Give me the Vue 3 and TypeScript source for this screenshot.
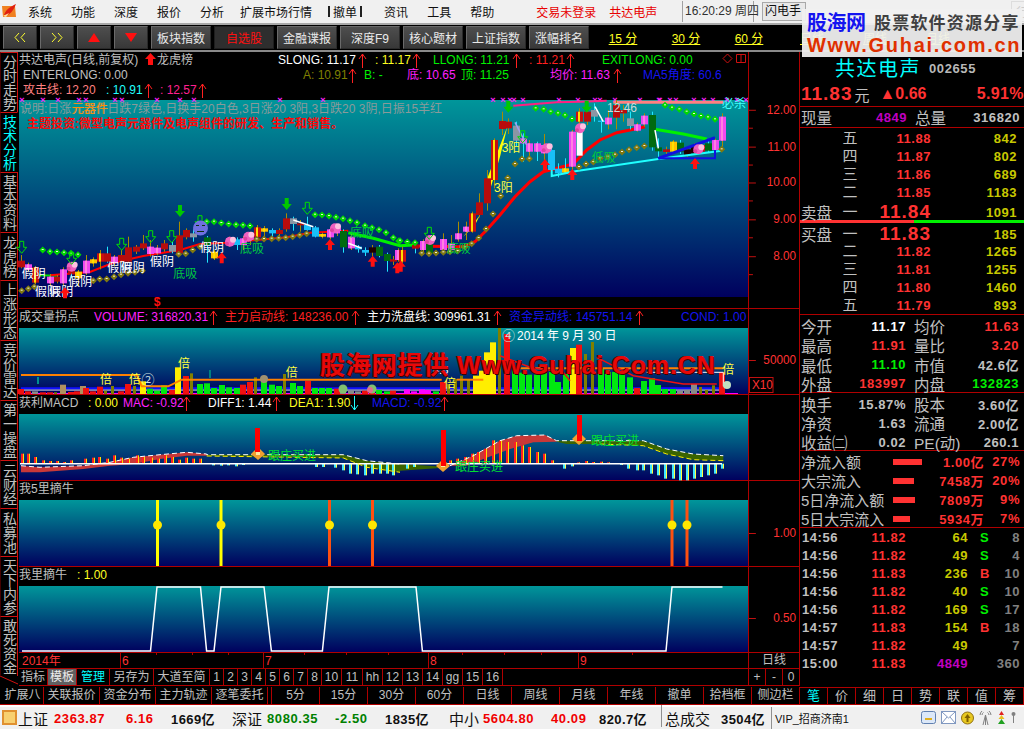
<script setup lang="ts">
type Shape = { k: 'r' | 'p' | 't' | 'c'; x?: number; y?: number; w?: number; h?: number; f?: string; s?: string; sw?: number; d?: string; dash?: string; t?: string; fs?: number; fw?: string; r?: number; a?: string; cls?: string }
type Lg = { x: number; t?: string; c: string; a?: string; w?: number }
type Pt = [number, number]

const Z3 = (p: Pt): Pt => [p[0] / 3, 130 + p[1] / 3]
const Z4 = (p: Pt): Pt => [400 + p[0] / 3, 90 + p[1] / 3]
const Z5 = (p: Pt): Pt => [p[0] / 3, 310 + p[1] / 3]
const Z6 = (p: Pt): Pt => [400 + p[0] / 3, 310 + p[1] / 3]
const dOf = (pts: Pt[]) => pts.map((p, i) => (i ? 'L' : 'M') + p[0].toFixed(1) + ' ' + p[1].toFixed(1)).join(' ')
const line = (pts: Pt[], s: string, sw = 1, dash?: string): Shape => ({ k: 'p', d: dOf(pts), s, sw, f: 'none', dash })
const poly = (pts: Pt[], f: string): Shape => ({ k: 'p', d: dOf(pts) + ' Z', f })
const rect = (x: number, y: number, w: number, h: number, f: string): Shape => ({ k: 'r', x, y, w, h, f })
const text = (x: number, y: number, t: string, f: string, fs = 12, fw = 'normal', a = 'start'): Shape => ({ k: 't', x, y, t, f, fs, fw, a })
const circle = (x: number, y: number, r: number, f: string): Shape => ({ k: 'c', x, y, r, f })
const diamond = (p: Pt, f: string): Shape[] => [poly([[p[0], p[1] - 3.5], [p[0] + 3.5, p[1]], [p[0], p[1] + 3.5], [p[0] - 3.5, p[1]]], f), rect(p[0] - 1, p[1] - 1, 2, 1, '#f0f0e0')]

const bodyCol: Record<string, string> = { r: '#b80c0c', y: '#c81010', m: '#f048f0', g: '#006a10', c: '#18c0f8', s: '#8a96a4', o: '#ffc000', k: '#200000' }
const candle = (map: (p: Pt) => Pt, v: [number, number, number, number, number, string, string?]): Shape[] => {
  const [zx, t, b, wt, wb, col, wc] = v
  const [x, y1] = map([zx, t])
  const [, y2] = map([zx, b])
  const [, w1] = map([zx, wt])
  const [, w2] = map([zx, wb])
  const wick = wc || (col === 'g' || col === 'c' || col === 's' ? '#20e8ff' : '#a88c00')
  const out: Shape[] = [rect(Math.round(x), w1, 1, w2 - w1, wick), rect(Math.round(x) - 3, y1, 7, y2 - y1, bodyCol[col])]
  if (col === 'y' || col === 'o') out.push(rect(Math.round(x) - 1, y1, 2, y2 - y1, '#ffe000'))
  if (col === 'm') out.push(rect(Math.round(x) - 1, y1, 2, y2 - y1, '#ff80e0'))
  return out
}
const candles3: [number, number, number, number, number, string, string?][] = [
  [64, 392, 412, 375, 415, 'r'], [85, 403, 420, 398, 425, 'm'], [105, 412, 458, 408, 462, 'y'], [150, 440, 460, 432, 470, 'm'], [170, 440, 455, 435, 460, 'r'],
  [190, 418, 460, 412, 465, 'm'], [213, 420, 431, 405, 445, 'r', '#20e8ff'], [235, 425, 445, 420, 470, 'o'], [257, 392, 430, 375, 435, 'm'], [280, 388, 400, 382, 410, 'o'],
  [300, 370, 395, 360, 418, 'y'], [320, 370, 395, 350, 398, 'r', '#20e8ff'], [342, 380, 400, 375, 410, 'm'], [363, 375, 392, 360, 398, 'r'], [385, 352, 395, 320, 398, 'r'],
  [408, 350, 365, 345, 372, 'r'], [430, 340, 355, 315, 360, 'r'], [450, 350, 372, 330, 380, 'm'], [472, 353, 370, 345, 376, 'm'], [493, 340, 358, 330, 365, 'r'],
  [515, 345, 365, 335, 370, 's'], [538, 316, 370, 275, 375, 'r'], [558, 300, 322, 295, 328, 'r'], [578, 310, 322, 298, 335, 's'], [622, 322, 345, 318, 398, 'g'],
  [643, 365, 385, 360, 390, 'o'], [688, 325, 340, 320, 350, 'm'], [710, 328, 345, 322, 360, 'c'], [730, 325, 345, 318, 360, 'm'], [750, 310, 330, 305, 345, 'm'],
  [772, 292, 322, 285, 328, 'y'], [793, 295, 305, 288, 320, 'o'], [815, 300, 310, 295, 322, 'c'], [838, 300, 312, 295, 318, 'r'], [858, 265, 298, 250, 305, 'r'],
  [880, 265, 282, 260, 302, 's'], [900, 280, 286, 270, 305, 'r'], [922, 285, 300, 260, 302, 'c'], [945, 292, 320, 288, 322, 'c'], [966, 312, 320, 308, 325, 'o'],
  [990, 298, 322, 292, 328, 'm'], [1010, 292, 310, 285, 318, 'm'], [1030, 303, 352, 298, 368, 'g'], [1052, 320, 355, 312, 360, 'm'], [1075, 350, 358, 345, 368, 'c'],
  [1095, 360, 368, 352, 378, 'c'], [1117, 352, 368, 345, 378, 'k'], [1138, 350, 378, 345, 382, 'g'], [1160, 372, 393, 368, 425, 'g'], [1180, 388, 395, 378, 405, 'r'], [1195, 360, 390, 355, 395, 'm']
]
const candles4: [number, number, number, number, number, string, string?][] = [
  [5, 480, 515, 470, 520, 'y'], [45, 465, 476, 455, 490, 'r', '#20e8ff'], [68, 453, 480, 448, 495, 'm'], [88, 455, 490, 450, 495, 'g'], [130, 447, 480, 430, 492, 'm'], [152, 460, 480, 435, 488, 'm'],
  [175, 430, 448, 395, 455, 'm'], [197, 410, 425, 395, 450, 'm'], [217, 370, 425, 365, 428, 'y'], [238, 337, 375, 310, 382, 'r'], [260, 265, 340, 240, 362, 'r'],
  [282, 150, 270, 145, 295, 'y'], [305, 93, 117, 65, 135, 'r'], [325, 95, 115, 85, 132, 'r'], [347, 107, 152, 95, 168, 's'], [368, 145, 160, 130, 215, 'm', '#20e8ff'],
  [388, 160, 185, 150, 215, 'm'], [410, 160, 185, 155, 213, 'm', '#20e8ff'], [432, 165, 190, 132, 215, 'm'], [454, 180, 240, 175, 250, 'c'], [475, 236, 250, 220, 262, 'c'],
  [495, 235, 248, 205, 252, 'o', '#20e8ff'], [517, 125, 230, 120, 245, 'm'], [538, 65, 95, 55, 135, 'y'], [560, 65, 95, 58, 105, 'r'], [583, 60, 80, 40, 95, 's'], [603, 92, 96, 85, 128, 'c'],
  [625, 83, 103, 60, 118, 'm'], [647, 45, 83, 30, 118, 'r'], [668, 60, 70, 45, 95, 'r'], [690, 85, 108, 65, 118, 's'], [712, 103, 122, 98, 125, 'm'], [733, 77, 103, 70, 110, 'm'],
  [755, 75, 172, 65, 182, 'g'], [775, 172, 184, 145, 210, 'g'], [797, 178, 186, 170, 200, 'r'], [818, 155, 185, 150, 190, 'o'], [840, 158, 185, 150, 192, 'g'], [860, 178, 195, 172, 200, 'k'],
  [882, 170, 190, 160, 195, 'k'], [903, 165, 185, 155, 192, 'y'], [925, 160, 182, 150, 188, 'g'], [945, 150, 180, 145, 185, 'm'], [967, 80, 152, 70, 170, 'm']
]
const g3: Pt[] = [[128, 360], [150, 365], [171, 366], [192, 368], [213, 370], [234, 374], [620, 275], [642, 275], [664, 279], [686, 282], [708, 284], [729, 286], [750, 288], [945, 254], [966, 255], [987, 258], [1008, 262], [1029, 266], [1050, 272], [1071, 278], [1095, 287], [1116, 293], [1137, 299], [1158, 308], [1180, 323], [1196, 333]]
const g4: Pt[] = [[0, 452], [22, 456], [45, 458], [407, 55], [431, 58], [452, 65], [474, 70], [495, 76], [516, 87], [795, 46], [816, 53], [838, 58], [860, 65], [882, 72], [903, 78], [924, 82], [945, 88]]
const o3: Pt[] = [[65, 482], [85, 476], [103, 470], [280, 452], [299, 447], [320, 447], [342, 440], [363, 434], [384, 430], [405, 427], [427, 422], [536, 373], [557, 371], [578, 360], [600, 350], [770, 328], [792, 327], [815, 326], [836, 325], [857, 323], [878, 320], [899, 316], [920, 311]]
const o4: Pt[] = [[65, 490], [87, 491], [108, 489], [130, 487], [150, 485], [173, 483], [195, 472], [215, 461], [236, 444], [258, 417], [279, 372], [302, 318], [323, 264], [345, 222], [366, 207], [388, 206], [537, 231], [558, 222], [580, 216], [601, 205], [623, 200], [645, 194], [666, 186], [687, 179], [710, 173], [733, 168], [965, 178]]

const upArrow = (p: Pt): Shape => poly([[p[0], p[1] - 6], [p[0] + 5, p[1]], [p[0] + 2, p[1]], [p[0] + 2, p[1] + 5], [p[0] - 2, p[1] + 5], [p[0] - 2, p[1]], [p[0] - 5, p[1]]], '#ff1010')
const downPts = (p: Pt): Pt[] => [[p[0] - 2, p[1] - 6], [p[0] + 2, p[1] - 6], [p[0] + 2, p[1]], [p[0] + 5, p[1]], [p[0], p[1] + 6], [p[0] - 5, p[1]], [p[0] - 2, p[1]]]
const greenDown = (p: Pt): Shape => poly(downPts(p), '#00c800')
const hollowDown = (p: Pt): Shape => ({ k: 'p', d: dOf(downPts(p)) + ' Z', f: 'none', s: '#00e000', sw: 1 })
const blob = (p: Pt): Shape[] => [circle(p[0], p[1], 5, '#f060c0'), circle(p[0] + 3, p[1] - 2, 3, '#ffc0e0'), circle(p[0] - 3, p[1] + 2, 2, '#e040a0')]

const xMarks = [22, 43, 58, 79, 86, 115, 122, 157, 180, 194, 280, 323, 493, 503, 510, 514, 523, 559, 578, 595, 600, 615, 640, 659, 670, 676, 694, 704, 713, 660, 727, 737, 746]

const mainShapes: Shape[] = [
  ...xMarks.map(x => text(x, 103, '×', '#ff20ff', 9, 'bold', 'middle')),
  text(20, 113, '说明:日涨元器件日跌7绿色,日换手20白色,3日涨20 3阳,3日跌20 3阴,日振15羊红', '#8a9a9a', 12),
  text(72, 113, '元器件', '#ff9000', 12),
  text(27, 128, '主题投资:微型电声元器件及电声组件的研发、生产和销售。', '#ff0808', 12, 'bold'),
  line([...[[340, 47], [470, 37], [540, 35], [620, 32]].map(p => Z4(p as Pt))], '#ff2080', 2),
  line([Z4([640, 37]), Z4([970, 37])], '#ff8080', 3),
  line([Z3([100, 435]), Z3([170, 437])], '#00e000', 2),
  line([Z3([150, 436]), Z3([270, 426]), Z3([340, 398]), Z3([430, 378]), Z3([540, 360]), Z3([600, 342]), Z3([680, 338]), Z3([770, 330]), Z3([860, 322]), Z3([930, 308]), Z3([1045, 302])], '#ff0000', 2),
  line([Z3([1045, 308]), Z3([1120, 325]), Z3([1200, 347]), Z4([40, 465])], '#00f000', 3),
  line([Z4([40, 468]), Z4([190, 470]), Z4([225, 455]), Z4([260, 420]), Z4([300, 375]), Z4([345, 320]), Z4([390, 275]), Z4([430, 245]), Z4([470, 235]), Z4([520, 222]), Z4([560, 180]), Z4([600, 150]), Z4([650, 128]), Z4([690, 120]), Z4([735, 110])], '#ff0000', 3),
  line([Z4([765, 118]), Z4([850, 132]), Z4([920, 147])], '#00f000', 3),
  poly([Z4([262, 265]), Z4([322, 110]), Z4([300, 200]), Z4([270, 300])], '#ffff00'),
  poly([Z4([190, 440]), Z4([240, 375]), Z4([225, 405])], '#ffff00'),
  ...candles3.flatMap(c => candle(Z3, c)),
  ...candles4.flatMap(c => candle(Z4, c)),
  rect(400 + 530 / 3, 90 + 125 / 3, 6, 24, '#ffffff'),
  line([Z4([345, 97]), Z4([380, 165])], '#a0a0f0', 1.5),
  line([Z4([585, 50]), Z4([610, 95])], '#ffffff', 1.5),
  line([Z4([765, 120]), Z4([775, 175])], '#ffffff', 1.5),
  line([Z3([880, 270]), Z3([940, 290])], '#ffffff', 1.5),
  line([Z3([1045, 340]), Z3([1085, 355])], '#ffffff', 1.5),
  line([Z4([455, 240]), Z4([455, 258]), Z4([530, 243]), Z4([775, 207]), Z4([965, 182])], '#20ffff', 2),
  line([Z4([775, 205]), Z4([945, 143])], '#1010e0', 3),
  line([Z4([775, 205]), Z4([945, 205]), Z4([945, 180])], '#1010e0', 2),
  ...[...g3.map(Z3), ...g4.map(Z4)].flatMap(p => diamond(p, '#00d800')),
  ...[...o3.map(Z3), ...o4.map(Z4)].flatMap(p => diamond(p, '#807810')),
  ...[Z3([215, 410]), Z3([690, 335]), Z3([745, 320]), Z3([1005, 295]), Z4([90, 450]), Z4([440, 175]), Z4([540, 115]), Z4([895, 178])].flatMap(blob),
  ...[[65, 445], [105, 497], [148, 497], [205, 468], [322, 427], [362, 427], [450, 407], [600, 367]].map(p => text(p[0] / 3, 130 + p[1] / 3, '假阴', '#ffffff', 12)),
  text(720 / 3, 130 + 368 / 3, '底吸', '#00c840', 12), text(1050 / 3, 130 + 322 / 3, '底吸', '#00c840', 12), text(520 / 3, 130 + 445 / 3, '底吸', '#00c840', 12),
  text(400 + 140 / 3, 90 + 488 / 3, '底吸', '#00c840', 12), text(400 + 575 / 3, 90 + 215 / 3, '低吸', '#00c840', 12),
  text(400 + 305 / 3, 90 + 185 / 3, '3阳', '#ffff40', 12), text(400 + 282 / 3, 90 + 305 / 3, '3阳', '#ffff40', 12),
  text(607, 112, '12.46', '#d0d8d8', 12), text(722, 108, '必杀', '#40ffff', 12),
  ...[Z3([195, 490]), Z3([665, 385]), Z3([990, 345]), Z3([1118, 395]), Z3([1192, 415]), Z4([435, 225]), Z4([517, 255]), Z4([885, 222]), Z4([2, 530])].map(upArrow),
  ...[Z3([540, 243]), Z3([860, 222]), Z4([325, 50]), Z4([560, 50])].map(greenDown),
  ...[Z3([65, 352]), Z3([215, 385]), Z3([365, 343]), Z3([452, 320]), Z3([515, 320]), Z3([600, 275]), Z3([922, 235]), Z4([88, 430]), Z4([368, 140])].map(hollowDown),
  circle(200.5, 228, 7.5, '#7070e0'), rect(196, 225, 3, 1, '#103010'), rect(202, 225, 3, 1, '#103010'), rect(197, 231, 7, 1, '#103010'),
  text(157, 306, '$', '#ff1010', 12, 'bold', 'middle')
]

const volZ5: [number, number, string][] = [[64, 15, 'r'], [85, 8, 'r'], [106, 8, 's'], [128, 5, 'r'], [150, 5, 'r'], [170, 5, 'o'], [190, 28, 't'], [212, 6, 'r'], [230, 8, 'r'], [250, 24, 't'], [258, 18, 'r'], [280, 8, 'r'], [300, 22, 'r'], [322, 10, 'o'], [342, 24, 'o'], [363, 8, 'r'], [385, 30, 'r'], [408, 24, 'o'], [430, 38, 'y'], [450, 16, 'g'], [472, 10, 'g'], [493, 26, 'g'], [515, 12, 'r'], [535, 80, 'y'], [558, 54, 'r'], [580, 62, 'o'], [600, 30, 'g'], [622, 32, 'g'], [643, 18, 'g'], [665, 27, 'g'], [688, 20, 'g'], [712, 18, 'g'], [730, 28, 'r'], [750, 36, 'r'], [770, 50, 'o'], [792, 52, 'g'], [815, 28, 'g'], [838, 24, 'g'], [857, 60, 'o'], [878, 33, 'g'], [900, 24, 'g'], [925, 39, 'r'], [945, 18, 'g'], [966, 18, 'g'], [988, 18, 'g'], [1010, 16, 'r'], [1030, 22, 's'], [1052, 10, 's'], [1075, 8, 's'], [1095, 10, 'r'], [1117, 16, 'r'], [1138, 12, 'g'], [1160, 8, 'g'], [1180, 10, 'r']]
const volZ6: [number, number, string][] = [[20, 14, 'm'], [42, 8, 'm'], [65, 14, 'm'], [85, 12, 'm'], [108, 8, 'g'], [130, 36, 'r'], [150, 30, 'o'], [170, 45, 'o'], [190, 55, 'o'], [210, 42, 'o'], [228, 55, 'y'], [245, 70, 'y'], [262, 125, 'y'], [280, 155, 'y'], [304, 198, 'o'], [322, 180, 'r'], [345, 76, 'g'], [365, 64, 'g'], [388, 58, 'g'], [410, 58, 'g'], [433, 66, 'g'], [455, 66, 'g'], [475, 36, 'g'], [497, 60, 'g'], [518, 138, 'y'], [538, 148, 'r'], [560, 120, 'o'], [583, 156, 'o'], [603, 75, 'g'], [625, 66, 'g'], [646, 66, 'g'], [666, 60, 'g'], [690, 50, 'g'], [710, 18, 'r'], [733, 39, 'g'], [755, 48, 'g'], [775, 27, 'g'], [795, 15, 'g'], [818, 15, 'g'], [840, 9, 's'], [860, 12, 's'], [883, 30, 's'], [905, 21, 'o'], [925, 12, 'o'], [945, 26, 'o'], [966, 66, 'r']]
const volCol: Record<string, string> = { r: '#f01010', y: '#ffee00', o: '#808000', g: '#00e810', s: '#8a8a8a', t: '#b09060', m: '#ff00ff' }
const volBar = (map: (p: Pt) => Pt, v: [number, number, string]): Shape[] => {
  const [x, y] = map([v[0], 255])
  const h = v[1] / 3
  return [rect(Math.round(x) - 3, y - h, v[2] === 'o' ? 3 : 6, h, volCol[v[2]])]
}
const volShapes: Shape[] = [
  rect(20, 394, 718, 1, '#ff00ff'),
  line([Z5([63, 243]), Z5([1200, 243]), Z6([970, 243])], '#ffffff', 1),
  line([Z5([63, 238]), Z5([1200, 238]), Z6([970, 238])], '#1010ff', 2),
  ...volZ5.flatMap(v => volBar(Z5, v)),
  ...volZ6.flatMap(v => volBar(Z6, v)),
  line([Z5([63, 198]), Z5([410, 198]), Z5([425, 232]), Z5([505, 232]), Z5([545, 212]), Z5([1200, 212]), Z6([125, 212])], '#ff8000', 2),
  line([Z6([170, 212]), Z6([250, 212])], '#ff8000', 2),
  line([Z6([340, 178]), Z6([970, 178])], '#ff8000', 2),
  line([Z6([740, 190]), Z6([970, 190]), Z6([970, 232])], '#ffffff', 1),
  line([Z6([300, 140]), Z6([390, 175]), Z6([490, 190]), Z6([510, 215])], '#f01010', 1.5),
  line([Z6([590, 145]), Z6([700, 200]), Z6([850, 225]), Z6([950, 225])], '#f01010', 1.5),
  rect(37, 378, 2, 7, '#009090'), rect(209, 371, 2, 8, '#008080'),
  circle(264, 380, 4, '#a09070'), circle(343, 390, 4.5, '#80c070'), circle(372, 390, 4.5, '#80c070'), circle(370, 391, 3, '#e07090'), circle(727, 386, 4, '#c0e0c0'),
  ...[[318, 225], [405, 225], [875, 203]].map(p => text(p[0] / 3, 310 + p[1] / 3, '倍', '#ffff40', 12, 'normal', 'middle')),
  ...[[150, 238], [985, 195]].map(p => text(400 + p[0] / 3, 310 + p[1] / 3, '倍', '#ffff40', 12, 'normal', 'middle')),
  text(184, 369, '倍', '#ffff40', 12, 'normal', 'middle'), text(148, 385, '②', '#d0e0e0', 13, 'normal', 'middle'),
  text(502, 341, '④', '#d0e0e0', 13), text(517, 341, '2014 年 9 月 30 日', '#ffffff', 12),
  text(433, 375, '4.5', '#ffffff', 11)
]

const up5: Pt[] = [[63, 470], [120, 475], [250, 470], [330, 460], [400, 445], [480, 437], [560, 430], [620, 435]]
const lo5: Pt[] = [[620, 440], [560, 440], [480, 450], [400, 465], [330, 470], [250, 480], [120, 490], [63, 490]]
const ol5u: Pt[] = [[620, 437], [1030, 437], [1100, 455], [1200, 465]]
const ol5l: Pt[] = [[1200, 490], [1100, 475], [1030, 447], [620, 441]]
const r6u: Pt[] = [[150, 470], [220, 440], [300, 395], [350, 380], [435, 378], [470, 395]]
const r6l: Pt[] = [[470, 398], [400, 400], [330, 420], [250, 450], [200, 470]]
const ol6u: Pt[] = [[470, 395], [730, 395], [800, 420], [880, 435], [970, 440]]
const ol6l: Pt[] = [[970, 455], [880, 452], [800, 435], [730, 410], [600, 405], [500, 405], [470, 398]]
const hist5: [number, number, string][] = [[65, 30, 'r'], [85, 30, 'r'], [105, 20, 'r'], [128, 10, 'r'], [150, 8, 'r'], [172, 8, 'r'], [192, 5, 'r'], [212, 10, 'r'], [255, 15, 'r'], [278, 18, 'r'], [298, 20, 'r'], [320, 15, 'r'], [342, 25, 'r'], [362, 18, 'r'], [385, 15, 'r'], [410, 25, 'r'], [430, 20, 'r'], [452, 18, 'r'], [474, 15, 'r'], [495, 25, 'r'], [515, 20, 'r'], [537, 12, 'r'], [558, 18, 'r'], [580, 15, 'r'], [600, 15, 'r'], [640, 5, 'c'], [662, 6, 'c'], [685, 5, 'c'], [708, 8, 'c'], [730, 4, 'c'], [948, 10, 'c'], [970, 10, 'c'], [1005, 12, 'c'], [1030, 20, 'c'], [1050, 30, 'c'], [1072, 32, 'c'], [1095, 35, 'c'], [1117, 30, 'c'], [1140, 30, 'c'], [1160, 30, 'c'], [1180, 35, 'c']]
const hist6: [number, number, string][] = [[20, 15, 'c'], [42, 10, 'c'], [150, 10, 'r'], [170, 15, 'r'], [195, 20, 'r'], [215, 30, 'r'], [235, 35, 'r'], [255, 45, 'r'], [278, 70, 'r'], [300, 70, 'r'], [322, 65, 'r'], [345, 65, 'r'], [367, 55, 'r'], [388, 50, 'r'], [410, 35, 'r'], [433, 30, 'r'], [455, 10, 'r'], [493, 15, 'c'], [515, 8, 'c'], [535, 4, 'r'], [558, 8, 'r'], [580, 5, 'r'], [603, 6, 'r'], [625, 4, 'r'], [664, 4, 'c'], [685, 15, 'c'], [710, 20, 'c'], [730, 20, 'c'], [752, 30, 'c'], [775, 35, 'c'], [795, 45, 'c'], [818, 45, 'c'], [840, 50, 'c'], [860, 50, 'c'], [882, 45, 'c'], [903, 40, 'c'], [923, 35, 'c'], [945, 30, 'c'], [967, 15, 'c']]
const histBar = (map: (p: Pt) => Pt, v: [number, number, string]): Shape[] => {
  const [x, y] = map([v[0], 464])
  const h = v[1] / 3
  const col = v[2] === 'r' ? '#ff2020' : '#40e8ff'
  return [rect(Math.round(x) - 1, v[2] === 'r' ? y - h : y, 2, h, col), rect(Math.round(x) + 1, v[2] === 'r' ? y - h : y, 1, h, v[2] === 'r' ? '#ffe000' : '#ffff40')]
}
const gold = (x: number, y: number): Shape[] => [poly([[x, y - 7], [x + 7, y], [x, y + 6], [x - 7, y]], '#f0a030'), rect(x - 2, y - 2, 4, 3, '#ffe8a0')]
const macdShapes: Shape[] = [
  poly([...up5.map(Z5), ...lo5.map(Z5)], '#c83838'),
  poly([...ol5u.map(Z5), ...ol5l.map(Z5)], '#3a6400'),
  poly([Z6([0, 465]), Z6([110, 472]), Z6([150, 470]), Z6([110, 478]), Z6([0, 485])], '#3a6400'),
  poly([...r6u.map(Z6), ...r6l.map(Z6)], '#c83838'),
  poly([...ol6u.map(Z6), ...ol6l.map(Z6)], '#3a6400'),
  ...hist5.flatMap(v => histBar(Z5, v)),
  ...hist6.flatMap(v => histBar(Z6, v)),
  rect(20, 464, 380, 1.5, '#ffffff'), rect(400, 464, 322, 1.5, '#ffffff'),
  line([...up5.map(Z5), ...ol5u.map(Z5)], '#ffffff', 1, '5 3'),
  line([...ol5l.slice().reverse().map(Z5)], '#ffee00', 1, '5 3'),
  line([...r6u.map(Z6), ...ol6u.map(Z6)], '#ffffff', 1, '5 3'),
  line([...ol6l.slice(0, 5).map(Z6)], '#ffee00', 1, '5 3'),
  ...gold(258, 455), ...gold(443, 467), ...gold(579, 440),
  rect(255, 429, 5, 24, '#ff0000'), rect(441, 431, 5, 36, '#ff0000'), rect(577, 416, 5, 26, '#ff0000'),
  text(268, 461, '跟庄买进', '#00e030', 12), text(455, 472, '跟庄买进', '#00e030', 12), text(591, 446, '跟庄买进', '#00e030', 12)
]

const starBars: [number, string][] = [[157.5, '#ffff00'], [221, '#ffff00'], [329.5, '#ff5010'], [372.5, '#ff5010'], [672, '#ff5010'], [687, '#ff5010']]
const starShapes: Shape[] = starBars.flatMap(([x, c]) => [rect(x - 1.5, 501, 3, 66, c), circle(x, 526, 4.5, '#ffe800')])
const bullShapes: Shape[] = [line([[22, 652], [150.5, 652], [157, 588], [200.5, 588], [206.6, 652], [214, 652], [221, 588], [264, 588], [271.4, 652], [322.4, 652], [329, 588], [416, 588], [422.4, 652], [666, 652], [672, 588], [722.5, 588]], '#ffffff', 1.5)]

const axisLabel = (y: number, t: string): Shape[] => [rect(749, y, 7, 1, '#c01010'), text(797, y + 4, t, '#ff3232', 12, 'normal', 'end')]
const minor = (ys: number[]): Shape[] => ys.map(y => rect(749, y, 4, 1, '#c01010'))

const lay = (items: Lg[]): Lg[] => {
  const first: Lg = { x: 19, c: '', w: items[0].x - 19 }
  return [first, ...items.map((it, i) => ({ ...it, w: (items[i + 1]?.x ?? 748) - it.x }))]
}

const panels = [
  {
    id: 'main', cls: 'p-main',
    legend: [
      lay([{ x: 19, t: '共达电声(日线,前复权)', c: 'gray' }, { x: 145, a: 'U', c: 'red' }, { x: 157, t: '龙虎榜', c: 'gray' }, { x: 278, t: 'SLONG: 11.17', c: 'white' }, { x: 358, a: 'u', c: 'red' }, { x: 375, t: ': 11.17', c: 'yel' }, { x: 412, a: 'u', c: 'red' }, { x: 433, t: 'LLONG: 11.21', c: 'grn' }, { x: 512, a: 'u', c: 'red' }, { x: 529, t: ': 11.21', c: 'red' }, { x: 566, a: 'u', c: 'red' }, { x: 602, t: 'EXITLONG: 0.00', c: 'grn' }, { x: 722, a: 'D', c: 'red' }, { x: 736, a: 'B', c: 'red' }]),
      lay([{ x: 23, t: 'ENTERLONG: 0.00', c: 'gray' }, { x: 303, t: 'A: 10.91', c: 'oli' }, { x: 348, a: 'u', c: 'red' }, { x: 364, t: 'B: -', c: 'grn' }, { x: 407, t: '底: 10.65', c: 'mag' }, { x: 461, t: '顶: 11.25', c: 'grn' }, { x: 550, t: '均价: 11.63', c: 'mag' }, { x: 613, a: 'u', c: 'red' }, { x: 643, t: 'MA5角度: 60.6', c: 'blu' }]),
      lay([{ x: 23, t: '攻击线: 12.20', c: 'pink' }, { x: 106, t: ': 10.91', c: 'cyn' }, { x: 144, a: 'u', c: 'red' }, { x: 160, t: ': 12.57', c: 'rose' }, { x: 198, a: 'u', c: 'red' }])
    ],
    box: '19 100 729 197', shapes: mainShapes,
    axisBox: '749 52 51 257',
    axis: [...axisLabel(110, '12.00'), ...axisLabel(147, '11.00'), ...axisLabel(183, '10.00'), ...axisLabel(220, '9.00'), ...axisLabel(257, '8.00'), ...minor([128, 165, 201, 238, 275])]
  },
  {
    id: 'vol', cls: 'p-sub',
    legend: [lay([{ x: 18, t: '成交量拐点', c: 'gray' }, { x: 93, t: 'VOLUME: 316820.31', c: 'mag' }, { x: 208, a: 'u', c: 'red' }, { x: 224, t: '主力启动线: 148236.00', c: 'red' }, { x: 350, a: 'u', c: 'red' }, { x: 366, t: '主力洗盘线: 309961.31', c: 'white' }, { x: 492, a: 'u', c: 'red' }, { x: 508, t: '资金异动线: 145751.14', c: 'blu' }, { x: 634, a: 'u', c: 'red' }, { x: 680, t: 'COND: 1.00', c: 'blu' }])],
    box: '19 329 729 66', shapes: volShapes,
    axisBox: '749 310 51 85',
    axis: [...axisLabel(361, '50000'), { k: 'r', x: 749.5, y: 378.5, w: 24, h: 15, f: 'none', s: '#c01010', sw: 1 } as Shape, text(752, 390, 'X10', '#ff3232', 12)]
  },
  {
    id: 'macd', cls: 'p-sub',
    legend: [lay([{ x: 18, t: '获利MACD', c: 'gray' }, { x: 87, t: ': 0.00', c: 'yel' }, { x: 122, t: 'MAC: -0.92', c: 'mag' }, { x: 181, a: 'u', c: 'red' }, { x: 207, t: 'DIFF1: 1.44', c: 'white' }, { x: 271, a: 'u', c: 'red' }, { x: 288, t: 'DEA1: 1.90', c: 'yel' }, { x: 349, a: 'd', c: 'cyn' }, { x: 371, t: 'MACD: -0.92', c: 'blu' }, { x: 439, a: 'u', c: 'red' }])],
    box: '19 415 729 66', shapes: macdShapes, axisBox: '749 396 51 85', axis: [] as Shape[]
  },
  {
    id: 'star', cls: 'p-sub',
    legend: [lay([{ x: 18, t: '我5里摘牛', c: 'gray' }])],
    box: '19 501 729 66', shapes: starShapes, axisBox: '749 482 51 85', axis: axisLabel(534, '1.00')
  },
  {
    id: 'bull', cls: 'p-sub',
    legend: [lay([{ x: 18, t: '我里摘牛', c: 'gray' }, { x: 76, t: ': 1.00', c: 'yel' }])],
    box: '19 587 729 66', shapes: bullShapes, axisBox: '749 568 51 85', axis: axisLabel(619, '0.50')
  }
]

const sideTabs = [
  { t: '分时走势', h: 't4' }, { t: '技术分析', h: 't4 on' }, { t: '基本资料', h: 't4' }, { t: '龙虎榜', h: 't3' }, { t: '上涨形态', h: 't4' }, { t: '竞价雷达', h: 't4' },
  { t: '第一操盘', h: 't4' }, { t: '云财经', h: 't3' }, { t: '私募池', h: 't3' }, { t: '天下内参', h: 't4' }, { t: '敢死资金', h: 't4' }
]
const menu = ['系统', '功能', '深度', '报价', '分析', '扩展市场行情']
const menu2 = ['资讯', '工具', '帮助']
const btns = ['板块指数', '自选股', '金融谍报', '深度F9', '核心题材', '上证指数', '涨幅排名']
const periods = ['15 分', '30 分', '60 分', '日线', '周线', '月线']

const sell = [['五', '11.88', '842'], ['四', '11.87', '802'], ['三', '11.86', '689'], ['二', '11.85', '1183']]
const buy = [['二', '11.82', '1265'], ['三', '11.81', '1255'], ['四', '11.80', '1460'], ['五', '11.79', '893']]
const stats1 = [
  ['今开', '11.17', 'n-w', '均价', '11.63', 'n-r'], ['最高', '11.91', 'n-r', '量比', '3.20', 'n-r'],
  ['最低', '11.10', 'n-g', '市值', '42.6亿', 'n-d'], ['外盘', '183997', 'n-r', '内盘', '132823', 'n-g']
]
const stats2 = [['换手', '15.87%', 'n-d', '股本', '3.60亿', 'n-d'], ['净资', '1.63', 'n-d', '流通', '2.00亿', 'n-d'], ['收益㈡', '0.02', 'n-d', 'PE(动)', '260.1', 'n-d']]
const flows = [
  { l: '净流入额', b: 29, v: '1.00亿', p: '27%' }, { l: '大宗流入', b: 21, v: '7458万', p: '20%' },
  { l: '5日净流入额', b: 22, v: '7809万', p: '9%' }, { l: '5日大宗流入', b: 17, v: '5934万', p: '7%' }
]
const trades = [
  ['14:56', '11.82', '64', 'S', '8'], ['14:56', '11.82', '49', 'S', '4'], ['14:56', '11.83', '236', 'B', '10'], ['14:56', '11.82', '40', 'S', '10'],
  ['14:56', '11.82', '169', 'S', '17'], ['14:57', '11.83', '154', 'B', '18'], ['14:57', '11.82', '49', '', '7'], ['15:00', '11.83', '4849', '', '360']
]
const timeTicks = [156, 192, 228, 304, 346, 388, 462, 504, 541, 632]
const timeLabels: [number, string][] = [[22, '2014年'], [122, '6'], [265, '7'], [430, '8'], [580, '9']]
const timeMajor = [120, 263, 428, 578]
const tools = [
  { t: '指标', w: 29 }, { t: '模板', w: 29, c: 'sel' }, { t: '管理', w: 33, c: 'cy' }, { t: '另存为', w: 44 }, { t: '大道至简', w: 56 },
  ...['1', '2', '3', '4', '5', '6', '7', '8'].map(t => ({ t, w: 14 })), { t: '10', w: 20 }, { t: '11', w: 21 }, { t: 'hh', w: 20 }, { t: '12', w: 20 }, { t: '13', w: 20 }, { t: '14', w: 20 }, { t: 'gg', w: 20 }, { t: '15', w: 20 }, { t: '16', w: 20 }
]
const bottomTabs = [
  { t: '扩展八', w: 42 }, { t: '关联报价', w: 56 }, { t: '资金分布', w: 56 }, { t: '主力轨迹', w: 56 }, { t: '逐笔委托', w: 56 }, { t: '', w: 4 },
  ...['5分', '15分', '30分', '60分', '日线', '周线', '月线', '年线', '撤单', '拾档框', '侧边栏'].map(t => ({ t, w: 48 }))
]
const rightTabs = ['笔', '价', '细', '日', '势', '联', '值', '筹']
const statusItems = lay([
  { x: 18, t: '上证', c: 's-l' }, { x: 54, t: '2363.87', c: 's-r' }, { x: 126, t: '6.16', c: 's-r' }, { x: 171, t: '1669亿', c: 's-k' },
  { x: 232, t: '深证', c: 's-l' }, { x: 267, t: '8080.35', c: 's-g' }, { x: 335, t: '-2.50', c: 's-g' }, { x: 385, t: '1835亿', c: 's-k' },
  { x: 449, t: '中小', c: 's-l' }, { x: 483, t: '5604.80', c: 's-r' }, { x: 551, t: '40.09', c: 's-r' }, { x: 599, t: '820.7亿', c: 's-k' },
  { x: 665, t: '总成交', c: 's-l sep' }, { x: 721, t: '3504亿', c: 's-k' }, { x: 775, t: 'VIP_招商济南1', c: 's-v sep' }
]).slice(1)
</script>

<template>
  <div class="app">
    <header class="menu">
      <svg class="logo" width="16" height="16" viewBox="0 0 16 16">
        <path d="M1 3 H14 L15 14 H2 Z" fill="#f08020" />
        <path d="M3 12 C5 6 9 4 15 1 C13 6 10 11 6 12 Z" fill="#e02010" />
        <path d="M2 13 L8 10 L5 14 Z" fill="#ffe0a0" />
      </svg>
      <span v-for="m in menu" :key="m" class="mi">{{ m }}</span>
      <span class="mi chex"><b class="bar"></b>撤单<b class="bar"></b></span>
      <span v-for="m in menu2" :key="m" class="mi">{{ m }}</span>
      <span class="mi login">交易未登录</span>
      <span class="mi stock">共达电声</span>
      <span class="clock">16:20:29 周四</span>
      <span class="flash">闪电手</span>
      <span v-for="m in ['行情', '资讯', '交易', '网站']" :key="m" class="faint">{{ m }}</span>
    </header>

    <nav class="toolbar">
      <button class="tb nav"><svg width="12" height="9" viewBox="0 0 12 9"><path d="M5 0 L1 4.5 L5 9 M11 0 L7 4.5 L11 9" fill="none" stroke="#ffff30" /></svg></button>
      <button class="tb nav"><svg width="12" height="9" viewBox="0 0 12 9"><path d="M1 0 L5 4.5 L1 9 M7 0 L11 4.5 L7 9" fill="none" stroke="#ffff30" /></svg></button>
      <button class="tb nav"><svg width="12" height="9" viewBox="0 0 12 9"><path d="M6 0 L12 9 H0 Z" fill="#ff1010" /></svg></button>
      <button class="tb nav"><svg width="12" height="9" viewBox="0 0 12 9"><path d="M0 0 H12 L6 9 Z" fill="#ff1010" /></svg></button>
      <button v-for="b in btns" :key="b" class="tb txt" :class="{ cur: b === '自选股' }">{{ b }}</button>
      <div class="periods">
        <span v-for="p in periods" :key="p" class="per">{{ p }}</span>
      </div>
    </nav>

    <div class="body">
      <aside class="side">
        <div v-for="s in sideTabs" :key="s.t" class="stab" :class="s.h"><span>{{ s.t }}</span></div>
        <svg class="sdiag" width="19" height="9" viewBox="0 0 19 9"><path d="M0 0 L18 8" stroke="#d01010" fill="none" /></svg>
      </aside>

      <main class="main">
        <section v-for="p in panels" :key="p.id" class="panel" :class="p.cls">
          <div class="plotcol">
            <div class="legend">
              <div v-for="(row, r) in p.legend" :key="r" class="lgrow">
                <span v-for="(it, i) in row" :key="i" class="lg" :class="it.c" :style="{ width: it.w + 'px' }">
                  <svg v-if="it.a === 'u'" width="9" height="15" viewBox="0 0 9 15"><path d="M4.5 1 V15 M1 6 L4.5 1 L8 6" fill="none" stroke="currentColor" /></svg>
                  <svg v-else-if="it.a === 'd'" width="9" height="15" viewBox="0 0 9 15"><path d="M4.5 0 V14 M1 9 L4.5 14 L8 9" fill="none" stroke="currentColor" /></svg>
                  <svg v-else-if="it.a === 'U'" width="11" height="13" viewBox="0 0 11 13"><path d="M5.5 0 L11 6 H8 V12 H3 V6 H0 Z" fill="#ff1010" /></svg>
                  <svg v-else-if="it.a === 'D'" width="11" height="11" viewBox="0 0 11 11"><path d="M5.5 1 L10 5.5 L5.5 10 L1 5.5 Z" fill="none" stroke="#d01010" /></svg>
                  <svg v-else-if="it.a === 'B'" width="10" height="11" viewBox="0 0 10 11"><path d="M.5 1.5 H9.5 V9.5 H.5 Z M5 1.5 V9.5" fill="none" stroke="#d01010" /></svg>
                  <template v-else>{{ it.t }}</template>
                </span>
              </div>
            </div>
            <div class="plot">
              <svg :viewBox="p.box" preserveAspectRatio="none" class="scene" :class="p.id">
                <template v-for="(s, i) in p.shapes" :key="i">
                  <rect v-if="s.k === 'r'" :x="s.x" :y="s.y" :width="s.w" :height="s.h" :fill="s.f" />
                  <path v-else-if="s.k === 'p'" :d="s.d" :fill="s.f" :stroke="s.s" :stroke-width="s.sw" :stroke-dasharray="s.dash" />
                  <circle v-else-if="s.k === 'c'" :cx="s.x" :cy="s.y" :r="s.r" :fill="s.f" />
                  <text v-else :x="s.x" :y="s.y" :fill="s.f" :font-size="s.fs" :font-weight="s.fw" :text-anchor="s.a">{{ s.t }}</text>
                </template>
              </svg>
            </div>
          </div>
          <svg class="axis" :viewBox="p.axisBox" preserveAspectRatio="none">
            <template v-for="(s, i) in p.axis" :key="i">
              <rect v-if="s.k === 'r'" :x="s.x" :y="s.y" :width="s.w" :height="s.h" :fill="s.f" :stroke="s.s" :stroke-width="s.sw" />
              <text v-else :x="s.x" :y="s.y" :fill="s.f" :font-size="s.fs" :text-anchor="s.a">{{ s.t }}</text>
            </template>
          </svg>
        </section>

        <div class="timerow">
          <svg class="timesvg" viewBox="19 0 729 15">
            <rect v-for="x in timeMajor" :key="x" :x="x" y="0" width="1" height="15" fill="#b00000" />
            <rect v-for="x in timeTicks" :key="'t' + x" :x="x" y="0" width="1" height="2" fill="#b00000" />
            <text v-for="l in timeLabels" :key="l[1]" :x="l[0]" y="12" fill="#ff3232" font-size="12">{{ l[1] }}</text>
          </svg>
          <div class="axcell">日线</div>
        </div>
        <div class="toolrow">
          <div class="tools">
            <span v-for="t in tools" :key="t.t" class="tool" :class="t.c" :style="{ width: t.w + 'px' }">{{ t.t }}</span>
          </div>
          <div class="zoomers"><span>+</span><span>-</span><span>0</span></div>
        </div>
      </main>

      <aside class="right">
        <div class="sec head">
          <div class="namerow"><span class="name">共达电声</span><span class="code">002655</span></div>
          <div class="pricerow">
            <span class="bigp">11.83</span><span class="yuan">元</span>
            <span class="chg">▲0.66</span><span class="pct">5.91%</span>
          </div>
        </div>
        <div class="sec volrow">
          <span class="lab l1">现量</span><span class="nb n-m">4849</span>
          <span class="lab l2">总量</span><span class="nb n-d r-end">316820</span>
        </div>
        <div class="sec book">
          <div v-for="r in sell" :key="r[1]" class="brow"><i></i><span class="cn">{{ r[0] }}</span><span class="nb n-r">{{ r[1] }}</span><span class="nb n-y">{{ r[2] }}</span></div>
          <div class="brow big"><i class="lab">卖盘</i><span class="cn">一</span><span class="nb n-r hero">11.84</span><span class="nb n-y">1091</span></div>
          <div class="split"></div>
          <div class="brow big"><i class="lab">买盘</i><span class="cn">一</span><span class="nb n-r hero">11.83</span><span class="nb n-y">185</span></div>
          <div v-for="r in buy" :key="r[1]" class="brow"><i></i><span class="cn">{{ r[0] }}</span><span class="nb n-r">{{ r[1] }}</span><span class="nb n-y">{{ r[2] }}</span></div>
        </div>
        <div class="sec stats s4">
          <div v-for="r in stats1" :key="r[0]" class="srow">
            <div class="cell"><span class="lab">{{ r[0] }}</span><span class="nb" :class="r[2]">{{ r[1] }}</span></div>
            <div class="cell"><span class="lab">{{ r[3] }}</span><span class="nb" :class="r[5]">{{ r[4] }}</span></div>
          </div>
        </div>
        <div class="sec stats s3">
          <div v-for="r in stats2" :key="r[0]" class="srow">
            <div class="cell"><span class="lab">{{ r[0] }}</span><span class="nb" :class="r[2]">{{ r[1] }}</span></div>
            <div class="cell"><span class="lab">{{ r[3] }}</span><span class="nb" :class="r[5]">{{ r[4] }}</span></div>
          </div>
        </div>
        <div class="sec flows">
          <div v-for="f in flows" :key="f.l" class="frow">
            <span class="lab">{{ f.l }}</span>
            <span class="fbarw"><i class="fbar" :style="{ width: f.b + 'px' }"></i></span>
            <span class="nb n-r">{{ f.v }}</span>
            <span class="nb n-r">{{ f.p }}</span>
          </div>
        </div>
        <div class="trades">
          <div v-for="(t, i) in trades" :key="i" class="trow">
            <span class="nb n-d">{{ t[0] }}</span>
            <span class="nb n-r ar">{{ t[1] }}</span>
            <span class="nb ar" :class="t[2] === '4849' ? 'n-m' : 'n-y'">{{ t[2] }}</span>
            <span class="nb bs" :class="t[3] === 'S' ? 'n-g' : 'n-r'">{{ t[3] }}</span>
            <span class="nb n-gg ar">{{ t[4] }}</span>
          </div>
        </div>
      </aside>
    </div>

    <div class="tabsrow">
      <div class="btabs">
        <span v-for="(t, i) in bottomTabs" :key="i" class="btab" :style="{ width: t.w + 'px' }">{{ t.t }}</span>
      </div>
      <div class="rtabs">
        <span v-for="t in rightTabs" :key="t" class="rtab" :class="{ on: t === '笔' }">{{ t }}</span>
      </div>
    </div>

    <footer class="status">
      <i class="sicon"></i>
      <span v-for="(s, i) in statusItems" :key="i" class="st" :class="s.c" :style="{ width: s.w + 'px' }">{{ s.t }}</span>
      <div class="sicons">
        <svg width="15" height="13" viewBox="0 0 15 13"><rect x=".5" y=".5" width="14" height="12" rx="2" fill="#dce8f8" stroke="#6080b0" /><rect x="4" y="7" width="7" height="2" fill="#e0b020" /></svg>
        <svg width="15" height="13" viewBox="0 0 15 13"><rect x=".5" y=".5" width="14" height="12" fill="#fff" stroke="#8098c0" /><path d="M1 1 L7.5 7 L14 1 M1 12 L6 6 M14 12 L9 6" fill="none" stroke="#8098c0" /></svg>
        <svg width="13" height="14" viewBox="0 0 13 14"><circle cx="6.5" cy="7" r="6" fill="#e8c820" stroke="#907010" /><path d="M6.5 3 L9.5 7 H7.5 V11 H5.5 V7 H3.5 Z" fill="#806000" /></svg>
        <svg width="13" height="15" viewBox="0 0 13 15"><path d="M6.5 5 V15 M4 15 L6.5 5 L9 15 M1 5 A6 6 0 0 1 3 1 M12 5 A6 6 0 0 0 10 1 M3 5 A3 3 0 0 1 4.5 2.5 M10 5 A3 3 0 0 0 8.5 2.5" fill="none" stroke="#808080" /></svg>
        <svg width="9" height="14" viewBox="0 0 9 14"><path d="M4.5 0 L7 4 H2 Z" fill="#e02020" /><path d="M4.5 4 L7.5 8 H1.5 Z" fill="#e8c020" /><path d="M4.5 8 L8 13 H1 Z" fill="#20a020" /></svg>
        <svg width="5" height="13" viewBox="0 0 5 13"><circle cx="2.5" cy="3" r="2" fill="#808080" /><path d="M2.5 4 V12" stroke="#808080" /></svg>
      </div>
    </footer>

    <div class="mark">股海网提供 Www.Guhai.Com.CN</div>
    <div class="brand">
      <div class="b1"><span class="bn">股海网</span><span class="bs1">股票软件资源分享</span></div>
      <div class="b2">Www.Guhai.com.cn</div>
    </div>
  </div>
</template>

<style>
html, body { margin: 0; padding: 0; background: #000; }
</style>

<style scoped>
* { box-sizing: border-box; }
.app { position: relative; width: 1024px; height: 729px; background: #000; overflow: hidden; display: flex; flex-direction: column; font-family: "Liberation Sans", "Noto Sans CJK SC", sans-serif; font-size: 12px; color: #c0c0c0; }

.menu { height: 23px; background: #f0f0f0; display: flex; align-items: center; color: #101010; gap: 19px; padding-left: 28px; position: relative; }
.logo { position: absolute; left: 1px; top: 3px; }
.mi { white-space: nowrap; font-size: 12px; }
.mi:nth-of-type(6) { margin-left: -3px; }
.chex { display: flex; align-items: center; gap: 2px; margin-left: -4px; margin-right: 2px; }
.bar { width: 2px; height: 11px; background: #202020; margin: 0 1px; }
.login { color: #e80000; margin-left: 23px; }
.stock { color: #e80000; margin-left: -6px; }
.clock { position: absolute; left: 682px; top: 1px; height: 21px; width: 72px; border-left: 1px solid #a0a0a0; border-right: 1px solid #a0a0a0; line-height: 21px; padding-left: 2px; color: #303030; white-space: nowrap; }
.flash { position: absolute; left: 762px; top: 2px; height: 19px; width: 44px; border: 1px solid #a8a8a8; background: #e8e8e8; line-height: 17px; padding-left: 2px; white-space: nowrap; color: #101010; }
.faint { position: relative; left: 340px; color: #ccc; border: 1px solid #ddd; padding: 1px 4px; margin-left: -5px; white-space: nowrap; }

.toolbar { height: 29px; display: flex; align-items: center; gap: 3px; padding: 0 0 0 3px; background: #000; border-top: 2px solid #a8a8a8; border-bottom: 2px solid #8a8a8a; }
.tb { height: 23px; padding: 0; border: 1px solid #6a6a6a; border-right-color: #2a2a2a; border-bottom-color: #2a2a2a; background: linear-gradient(#4e4e4e, #383838); color: #eaeaea; font: 12px "Liberation Sans", "Noto Sans CJK SC", sans-serif; display: flex; align-items: center; justify-content: center; }
.nav { width: 34px; }
.txt { width: 60px; }
.cur { background: #2e2e2e; color: #ff1010; border-color: #1e1e1e; }
.periods { display: flex; gap: 33px; margin-left: 16px; }
.per { width: 30px; color: #ffff20; text-decoration: underline; white-space: nowrap; text-align: center; }

.body { height: 635px; margin-top: 0; display: flex; }
.side { width: 19px; display: flex; flex-direction: column; padding-top: 0; background: #000; position: relative; }
.stab { width: 18px; border: 1px solid #d01010; border-left: 1px solid #400; border-bottom: none; display: flex; align-items: center; justify-content: center; color: #c0c0c0; }
.stab span { writing-mode: vertical-rl; font-size: 14px; letter-spacing: 0; line-height: 16px; }
.t4 { height: 60px; }
.t3 { height: 48px; }
.on { color: #00ffff; border-right-color: #000; }
.sdiag { display: block; }

.main { width: 781px; display: flex; flex-direction: column; position: relative; }
.panel { display: flex; border-bottom: 1px solid #b00000; }
.p-main { height: 257px; }
.p-sub { height: 86px; }
.plotcol { width: 729px; display: flex; flex-direction: column; }
.legend { flex: none; }
.p-main .legend { height: 48px; padding-top: 1px; }
.p-sub .legend { height: 19px; padding-top: 1px; }
.lgrow { display: flex; height: 15px; line-height: 15px; white-space: nowrap; }
.lg { display: block; flex: none; height: 15px; }
.lg svg { display: block; }
.gray { color: #c0c0c0; }
.white { color: #fff; }
.yel { color: #ffff20; }
.grn { color: #00f000; }
.red { color: #ff2020; }
.pink { color: #ff8080; }
.cyn { color: #20ffff; }
.rose { color: #ff2090; }
.mag { color: #ff20ff; }
.blu { color: #1414f0; }
.oli { color: #808000; }
.plot { background: linear-gradient(#00969a, #00005e); }
.p-main .plot { height: 197px; }
.p-sub .plot { height: 66px; }
.scene { display: block; width: 729px; height: 100%; overflow: visible; shape-rendering: auto; font-family: "Liberation Sans", "Noto Sans CJK SC", sans-serif; }
.axis { width: 52px; height: 100%; display: block; border-left: 1px solid #b00000; border-right: 1px solid #b00000; font-family: "Liberation Sans", sans-serif; }

.timerow { height: 16px; display: flex; border-bottom: 1px solid #b00000; }
.timesvg { width: 729px; height: 15px; display: block; font-family: "Liberation Sans", "Noto Sans CJK SC", sans-serif; }
.axcell { width: 52px; border-left: 1px solid #b00000; border-right: 1px solid #b00000; text-align: center; line-height: 15px; }
.toolrow { height: 17px; display: flex; border-bottom: 1px solid #b00000; }
.tools { width: 729px; display: flex; }
.tool { border-right: 1px solid #b00000; text-align: center; line-height: 16px; flex: none; white-space: nowrap; }
.sel { background: #606060; color: #eee; }
.cy { color: #00ffff; }
.zoomers { width: 52px; display: flex; border-left: 1px solid #b00000; border-right: 1px solid #b00000; }
.zoomers span { flex: 1; text-align: center; line-height: 16px; border-right: 1px solid #b00000; }
.zoomers span:last-child { border-right: none; }

.right { width: 224px; display: flex; flex-direction: column; padding-top: 0; }
.sec { border-bottom: 1px solid #b00000; }
.head { height: 55px; }
.namerow { height: 30px; display: flex; align-items: flex-end; padding: 0 0 1px 35px; }
.name { color: #00ffff; font-size: 20px; line-height: 24px; letter-spacing: 1.5px; }
.code { color: #b8b8b8; font-weight: bold; font-size: 13px; letter-spacing: .6px; margin-left: 8px; line-height: 24px; }
.pricerow { height: 24px; display: flex; align-items: center; padding-left: 1px; position: relative; }
.bigp { color: #ff3232; font-weight: bold; font-size: 19px; letter-spacing: 1px; }
.yuan { font-size: 15px; margin-left: 2px; }
.chg { color: #ff3232; font-weight: bold; font-size: 16px; margin-left: 10px; }
.pct { color: #ff3232; font-weight: bold; font-size: 16px; margin-left: auto; margin-right: 0; letter-spacing: .4px; }
.nb { font-weight: bold; font-size: 13px; letter-spacing: .55px; white-space: nowrap; }
.lab { font-size: 15.5px; color: #c0c0c0; font-style: normal; white-space: nowrap; }
.n-r { color: #ff3232; }
.n-y { color: #c8c800; }
.n-d { color: #c0c0c0; }
.n-w { color: #fff; }
.n-g { color: #00f000; }
.n-m { color: #c000c0; }
.n-gg { color: #808080; }
.volrow { height: 21px; display: grid; grid-template-columns: 75px 31px 8px 31px 74px; grid-template-rows: 20px; align-items: center; padding-left: 1px; }
.volrow > * { grid-row: 1; }
.volrow .l1 { grid-column: 1; justify-self: start; }
.volrow .n-m { grid-column: 1 / span 2; justify-self: end; }
.volrow .l2 { grid-column: 4; }
.volrow .r-end { grid-column: 5; justify-self: end; }
.book { height: 187px; padding-top: 1px; }
.brow { display: grid; grid-template-columns: 41px 16px 73px 86px; height: 18px; align-items: center; padding-left: 1px; }
.brow .cn { font-size: 15px; text-align: center; line-height: 18px; }
.brow .nb { text-align: right; }
.big { height: 19px; }
.hero { font-size: 19px; letter-spacing: 1px; }
.split { height: 3px; background: linear-gradient(90deg, #ff3232 0 114px, #00f000 114px); }
.stats { padding-left: 1px; }
.s4 { height: 78px; }
.s3 { height: 58px; }
.srow { display: grid; grid-template-columns: 105px 105px; column-gap: 8px; height: 19px; align-items: center; }
.s4 .srow { height: 19.25px; }
.cell { display: flex; justify-content: space-between; align-items: center; }
.flows { height: 77px; padding-left: 1px; }
.frow { display: grid; grid-template-columns: 92px 30px 61px 36px; height: 19px; align-items: center; }
.frow .lab { font-size: 15px; }
.frow .nb { text-align: right; }
.fbarw { display: flex; align-items: center; }
.fbar { display: block; height: 6px; background: #ff3232; }
.trades { padding: 0 0 0 2px; }
.trow { display: grid; grid-template-columns: 36px 68px 62px 24px 28px; height: 18px; align-items: center; }
.ar { text-align: right; }
.bs { padding-left: 12px; }

.tabsrow { height: 18px; display: flex; }
.btabs { width: 801px; display: flex; padding-left: 2px; border-bottom: 1px solid #b00000; }
.btab { flex: none; border-right: 1px solid #b00000; text-align: center; line-height: 17px; white-space: nowrap; }
.rtabs { flex: 1; display: flex; border-top: 1px solid #b00000; border-bottom: 1px solid #b00000; }
.rtab { width: 28px; border-right: 1px solid #b00000; text-align: center; line-height: 16px; font-size: 13px; }
.rtab.on { color: #00ffff; }

.status { height: 24px; background: #f0f0f0; border-top: 2px solid #fff; display: flex; align-items: center; padding-left: 18px; position: relative; }
.sicon { position: absolute; left: 2px; top: 3px; width: 15px; height: 15px; border: 2px solid #e09030; background: #f8d070; }
.st { flex: none; white-space: nowrap; display: block; position: relative; }
.sep::before { content: ""; position: absolute; left: -4px; top: -3px; height: 22px; width: 1px; background: #909090; }
.s-l { font-size: 15px; color: #101010; }
.s-r { font-weight: bold; font-size: 13px; letter-spacing: .6px; color: #f00000; }
.s-g { font-weight: bold; font-size: 13px; letter-spacing: .6px; color: #008000; }
.s-k { font-weight: bold; font-size: 13px; letter-spacing: .4px; color: #101010; }
.s-v { font-size: 11px; color: #101010; }
.sicons { position: absolute; left: 921px; top: 3px; display: flex; gap: 5px; align-items: center; }

.mark { position: absolute; left: 320px; top: 348px; white-space: nowrap; color: #e80808; font-weight: bold; font-size: 25px; line-height: 34px; letter-spacing: .85px; text-shadow: 1px 1px 0 #400000, -1px 0 0 #600000; }
.brand { position: absolute; left: 802px; top: 9px; width: 220px; height: 48px; background: rgba(240, 240, 240, .94); padding: 0 0 0 5px; }
.b1 { display: flex; align-items: center; height: 24px; white-space: nowrap; }
.bn { color: #1414f0; font-weight: bold; font-size: 20px; letter-spacing: -.5px; width: 67px; }
.bs1 { color: #404040; font-size: 17px; font-family: "Noto Sans CJK SC", serif; letter-spacing: 1.2px; font-weight: bold; }
.b2 { color: #e03000; font-weight: bold; font-size: 20px; line-height: 22px; letter-spacing: 1.7px; margin-top: 1px; white-space: nowrap; }
</style>
